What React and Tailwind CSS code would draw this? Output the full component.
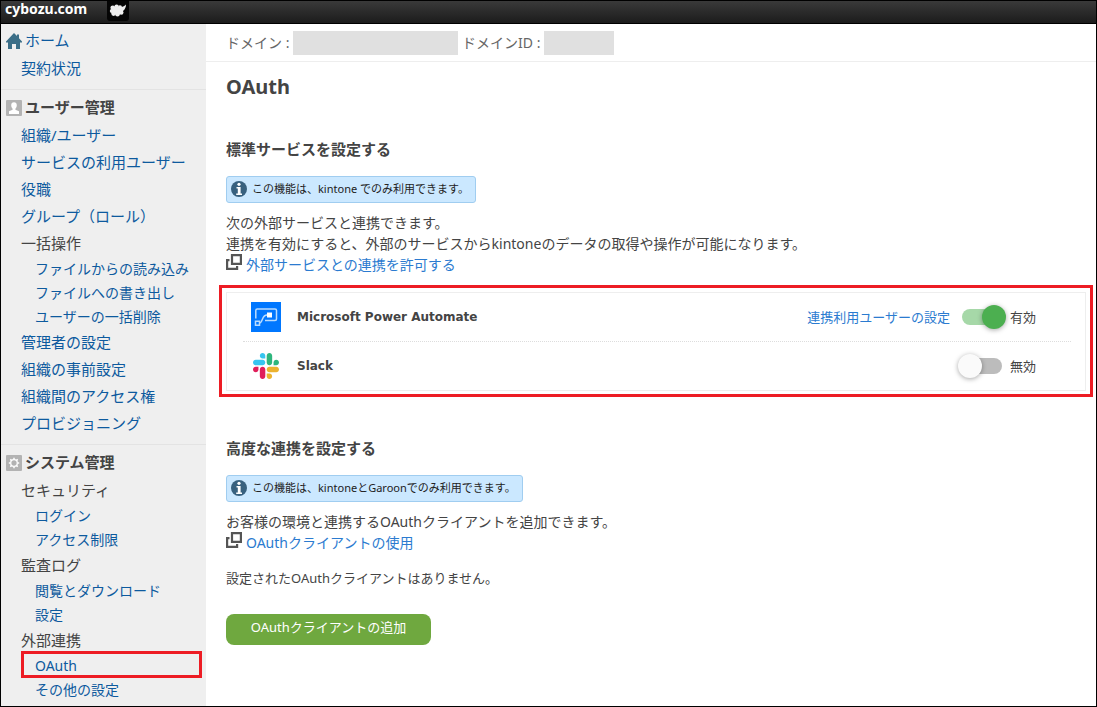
import { useState } from "react";

const MENU = [
  {
    title: "ユーザー管理",
    icon: "user",
    items: [
      { label: "組織/ユーザー" },
      { label: "サービスの利用ユーザー" },
      { label: "役職" },
      { label: "グループ（ロール）" },
      { label: "一括操作", children: ["ファイルからの読み込み", "ファイルへの書き出し", "ユーザーの一括削除"] },
      { label: "管理者の設定" },
      { label: "組織の事前設定" },
      { label: "組織間のアクセス権" },
      { label: "プロビジョニング" },
    ],
  },
  {
    title: "システム管理",
    icon: "gear",
    items: [
      { label: "セキュリティ", children: ["ログイン", "アクセス制限"] },
      { label: "監査ログ", children: ["閲覧とダウンロード", "設定"] },
      { label: "外部連携", children: ["OAuth", "その他の設定"] },
    ],
  },
];

function HomeIcon() {
  return (
    <svg className="size-4 shrink-0" viewBox="0 0 16 16" fill="#3b6e87" aria-hidden="true">
      <path d="M8 0 0 8.500V9.500h2V16h4v-5h4v5h4V9.500h2V8.500L13 5.200V1.500h-2v1.600z" />
    </svg>
  );
}

function SectionIcon({ name }) {
  return (
    <svg className="size-4 shrink-0" viewBox="0 0 16 16" aria-hidden="true">
      <rect width="16" height="16" rx="1" fill="#b3b3b3" />
      {name === "user" ? (
        <path fill="#fff" d="M8 2.200c1.800 0 2.800 1.200 2.800 3 0 1.500-.6 2.800-1.400 3.500v1l3.600 1.500V14H3v-2.800l3.600-1.500v-1C5.800 8 5.200 6.700 5.200 5.200c0-1.800 1-3 2.800-3z" />
      ) : (
        <g stroke="#fff" fill="none">
          <circle cx="8" cy="8" r="3.300" strokeWidth="1.300" />
          <path strokeWidth="1.500" d="M8 2.800v1.500M8 11.700v1.500M2.800 8h1.500M11.700 8h1.500M4.300 4.300l1.100 1.100M10.600 10.600l1.100 1.100M4.300 11.700l1.100-1.100M10.600 5.400l1.100-1.100" />
        </g>
      )}
    </svg>
  );
}

function CloudIcon() {
  return (
    <svg className="h-5 w-[22px]" viewBox="0 0 22 20" aria-hidden="true">
      <path d="M0 0h22v17a3 3 0 0 1-3 3H3a3 3 0 0 1-3-3z" fill="#050505" />
      <g fill="#eee">
        <circle cx="5.800" cy="6.800" r="2.400" />
        <circle cx="9.600" cy="5.800" r="2.200" />
        <circle cx="13" cy="6.200" r="2" />
        <circle cx="4.800" cy="10" r="2" />
        <circle cx="6.600" cy="12.600" r="2.300" />
        <circle cx="10.500" cy="13.200" r="2.300" />
        <circle cx="14.200" cy="11.500" r="2.300" />
        <path d="M5 6h9c2-.2 3.600-1 5-2.600 0 2.600-1 4.800-3 6.600l-3 3H6z" />
      </g>
    </svg>
  );
}

function WindowIcon() {
  return (
    <svg className="size-4 shrink-0" viewBox="0 0 16 16" fill="none" stroke="#555" strokeWidth="2.200" aria-hidden="true">
      <path d="M6 1.100h8.900v8.800H6z" />
      <path d="M3.500 6.100H1.100v8.800h10V12" />
    </svg>
  );
}

function PowerAutomateIcon() {
  return (
    <svg className="size-[30px]" viewBox="0 0 30 30" aria-hidden="true">
      <rect width="30" height="30" fill="#0077ff" />
      <g fill="none" stroke="#b9dcff" strokeWidth="1.500">
        <path d="M4.800 16.500V8.500a1.500 1.500 0 0 1 1.500-1.500H24a1.500 1.500 0 0 1 1.500 1.500V17a1.500 1.500 0 0 1-1.500 1.500H14" />
        <path d="M4.500 19.200h4v4h-4z" />
        <path d="M8.500 21c1.500 0 2-1.500 3-4s2-4 4.500-4" />
      </g>
      <path fill="#fff" d="M16 10.500h5v5h-5z" />
    </svg>
  );
}

function SlackIcon() {
  return (
    <svg className="size-[26px]" viewBox="0 0 122.8 122.8" aria-hidden="true">
      <path fill="#e01e5a" d="M25.800 77.600c0 7.100-5.800 12.900-12.900 12.900S0 84.700 0 77.600s5.800-12.900 12.900-12.900h12.900v12.900zm6.500 0c0-7.100 5.800-12.900 12.900-12.900s12.900 5.800 12.900 12.900v32.300c0 7.100-5.800 12.900-12.900 12.900s-12.900-5.800-12.900-12.900V77.600z" />
      <path fill="#36c5f0" d="M45.200 25.800c-7.100 0-12.900-5.800-12.900-12.900S38.100 0 45.200 0s12.900 5.800 12.900 12.900v12.900H45.200zm0 6.500c7.100 0 12.900 5.800 12.900 12.900s-5.800 12.900-12.900 12.900H12.900C5.800 58.100 0 52.300 0 45.200s5.800-12.900 12.900-12.900h32.300z" />
      <path fill="#2eb67d" d="M97 45.200c0-7.100 5.800-12.900 12.900-12.900s12.900 5.800 12.900 12.900-5.800 12.900-12.900 12.900H97V45.200zm-6.500 0c0 7.100-5.800 12.900-12.900 12.900s-12.900-5.800-12.900-12.900V12.900C64.700 5.800 70.500 0 77.600 0s12.900 5.800 12.900 12.900v32.300z" />
      <path fill="#ecb22e" d="M77.600 97c7.100 0 12.900 5.800 12.900 12.900s-5.800 12.900-12.900 12.900-12.900-5.800-12.900-12.900V97h12.900zm0-6.500c-7.100 0-12.900-5.800-12.900-12.900s5.800-12.900 12.900-12.900h32.300c7.100 0 12.900 5.800 12.900 12.900s-5.800 12.900-12.900 12.900H77.600z" />
    </svg>
  );
}

function MenuItem({ item }) {
  if (!item.children) {
    return (
      <li className="h-[27px] pl-5">
        <a href="#" className="text-[#0d5a9e]">{item.label}</a>
      </li>
    );
  }
  return (
    <li>
      <div className="h-[27px] pl-5">{item.label}</div>
      <ul>
        {item.children.map((child) => (
          <li key={child} className="relative h-6 pl-[34px] text-sm leading-6">
            <a href="#" className="text-[#0d5a9e]">{child}</a>
            {child === "OAuth" && (
              <span className="pointer-events-none absolute -top-[3px] right-1 bottom-0 left-5 border-3 border-[#ed1c24]" />
            )}
          </li>
        ))}
      </ul>
    </li>
  );
}

function Sidebar() {
  return (
    <nav className="w-[205px] shrink-0 bg-[#efefef] pt-1 pb-1 text-[15px] leading-[27px]">
      <ul className="border-b border-[#e3e3e3] pb-[7px]">
        <li className="flex h-[27px] items-center gap-[3px] pb-0.5 pl-[5px]">
          <HomeIcon />
          <a href="#" className="text-[#0d5a9e]">ホーム</a>
        </li>
        <li className="h-[27px] pl-5">
          <a href="#" className="text-[#0d5a9e]">契約状況</a>
        </li>
      </ul>
      {MENU.map((section) => (
        <section key={section.title} className="border-b border-[#e3e3e3] pt-[5px] pb-[7px] last:border-b-0 last:pb-0">
          <h2 className="flex h-[27px] items-center gap-[3px] pb-0.5 pl-[5px] font-bold">
            <SectionIcon name={section.icon} />
            {section.title}
          </h2>
          <ul>
            {section.items.map((item) => (
              <MenuItem key={item.label} item={item} />
            ))}
          </ul>
        </section>
      ))}
    </nav>
  );
}

function Notice({ children }) {
  return (
    <p className="flex h-[27px] w-fit items-center gap-[5px] rounded-[3px] border border-[#a0cdf0] bg-[#cbe8ff] pr-1.5 pb-0.5 pl-1 text-[11px] leading-4 text-[#222]">
      <svg className="size-4 shrink-0" viewBox="0 0 16 16" aria-hidden="true">
        <circle cx="8" cy="8" r="8" fill="#38617f" />
        <circle cx="8" cy="3.300" r="1.600" fill="#fff" />
        <path fill="#fff" d="M5.500 6H9.600v6.500H11V14H5.200v-1.500H6.800V7.500H5.500z" />
      </svg>
      <span>{children}</span>
    </p>
  );
}

function HelpLink({ children }) {
  return (
    <a href="#" className="flex h-[21px] w-fit items-start gap-1 text-[#2b7bd0]">
      <WindowIcon />
      {children}
    </a>
  );
}

function Service({ icon, name, link, initial }) {
  const [on, setOn] = useState(initial);
  return (
    <li className="flex h-[49px] items-center border-b border-dotted border-[#ddd] last:h-12 last:border-b-0">
      <span className="ml-2 flex w-[30px] justify-center">{icon}</span>
      <span className="ml-4 flex-1 font-['DejaVu_Sans',sans-serif] text-xs font-bold">{name}</span>
      {link && <a href="#" className="mr-2 text-[13px] text-[#2b7bd0]">{link}</a>}
      <label className="flex w-[113px] items-center gap-1 text-[13px]">
        <span className="flex h-6 w-12 items-center">
          <input type="checkbox" role="switch" checked={on} onChange={() => setOn(!on)} className="peer sr-only" />
          <span className="mx-1 flex h-4 w-10 items-center rounded-full bg-[#bcbcbc] peer-checked:bg-[#a6d8a8] peer-checked:[&>span]:translate-x-6 peer-checked:[&>span]:bg-[#4caf50]">
            <span className="-ml-1 size-6 shrink-0 rounded-full bg-[#fafafa] shadow-[0_1px_5px_rgba(0,0,0,0.35)]" />
          </span>
        </span>
        {on ? "有効" : "無効"}
      </label>
    </li>
  );
}

export default function App() {
  return (
    <div className="flex min-h-screen flex-col border-x border-b border-black bg-white font-['Noto_Sans','Noto_Sans_CJK_JP',sans-serif] text-[15px] text-[#444]">
      <header className="flex h-6 items-start gap-5 border-y border-black bg-linear-to-b from-[#3a3a3a] to-[#1c1c1c] pl-1">
        <a href="#" className="text-sm leading-4 font-bold text-white">cybozu.com</a>
        <a href="#" aria-label="kintone"><CloudIcon /></a>
      </header>
      <div className="flex flex-1">
        <Sidebar />
        <main className="min-w-0 flex-1">
          <div className="flex h-[38px] items-center border-b border-[#eee] pl-5 text-sm whitespace-pre text-[#666]">
            <span>{"ドメイン : "}</span>
            <span className="h-6 w-[165px] bg-[#e0e0e0]" />
            <span className="ml-1">{"ドメインID : "}</span>
            <span className="h-6 w-[70px] bg-[#e0e0e0]" />
          </div>
          <div className="pr-[9px] pl-5 text-sm leading-[21px]">
            <h1 className="pt-[10px] text-xl leading-[30px] font-bold">OAuth</h1>
            <h2 className="mt-9 mb-4 text-[15px] leading-[22px] font-bold">標準サービスを設定する</h2>
            <Notice>この機能は、kintone でのみ利用できます。</Notice>
            <p className="mt-[9px]">
              次の外部サービスと連携できます。
              <br />
              連携を有効にすると、外部のサービスからkintoneのデータの取得や操作が可能になります。
            </p>
            <HelpLink>外部サービスとの連携を許可する</HelpLink>
            <div className="mt-[10px] -mr-[6px] -ml-[7px] border-3 border-[#ed1c24] px-1 pt-1 pb-[3px]">
              <ul className="border border-[#eee] pr-[14px] pl-4">
                <Service icon={<PowerAutomateIcon />} name="Microsoft Power Automate" link="連携利用ユーザーの設定" initial />
                <Service icon={<SlackIcon />} name="Slack" initial={false} />
              </ul>
            </div>
            <h2 className="mt-10 mb-4 text-[15px] leading-[22px] font-bold">高度な連携を設定する</h2>
            <Notice>この機能は、kintoneとGaroonでのみ利用できます。</Notice>
            <p className="mt-[9px]">お客様の環境と連携するOAuthクライアントを追加できます。</p>
            <HelpLink>OAuthクライアントの使用</HelpLink>
            <p className="mt-[15px] text-[13px]">設定されたOAuthクライアントはありません。</p>
            <button type="button" className="mt-[25px] h-[31px] w-[205px] rounded-lg bg-[#6fa83f] pb-1 text-[13px] text-white">
              OAuthクライアントの追加
            </button>
          </div>
        </main>
      </div>
    </div>
  );
}
